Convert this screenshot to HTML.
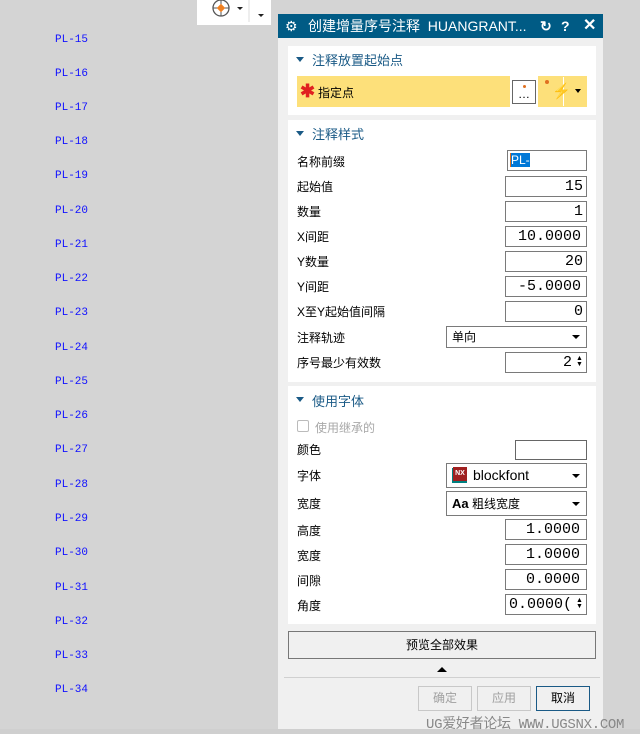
<!DOCTYPE html>
<html><head><meta charset="utf-8"><style>
*{box-sizing:border-box;margin:0;padding:0}
body{width:640px;height:734px;background:#d4d4d4;position:relative;overflow:hidden;font-family:"Liberation Sans","Noto Sans CJK SC",sans-serif;font-size:12px;color:#000}
.a{position:absolute}
.pl{position:absolute;left:55px;color:#1010ff;font-family:"Liberation Mono",monospace;font-size:11px;letter-spacing:0px}
.sec{position:absolute;left:288px;width:308px;background:#fff}
.hd{position:absolute;left:24px;color:#1a5a86;font-size:13px}
.tri{position:absolute;left:8px;width:0;height:0;border-left:4px solid transparent;border-right:4px solid transparent;border-top:5px solid #1a5a86}
.lb{position:absolute;left:297px;font-size:12px}
.in{position:absolute;left:505px;width:82px;height:21px;border:1px solid #7a7a7a;background:#fff;font-family:"Liberation Mono",monospace;font-size:15px;text-align:right;padding-right:3px;line-height:19px;overflow:hidden;white-space:nowrap}
.dd{position:absolute;left:446px;width:141px;border:1px solid #7a7a7a;background:#fff;font-size:12px;padding-left:5px}
.dd:after{content:"";position:absolute;right:6px;top:50%;margin-top:-2px;border-left:4px solid transparent;border-right:4px solid transparent;border-top:4px solid #000}
.btn{position:absolute;top:686px;height:25px;width:54px;border:1px solid #c8c8c8;text-align:center;line-height:23px;color:#a0a0a0;font-size:12px}
</style></head><body>
<div class="a" style="left:197px;top:0;width:74px;height:25px;background:#fff"></div>
<svg class="a" style="left:208px;top:0" width="60" height="22"><circle cx="13" cy="8" r="8" fill="none" stroke="#555" stroke-width="1.3"/><path d="M13 0v16M5 8h16" stroke="#555" stroke-width="1"/><rect x="10" y="5" width="6" height="6" fill="#f08020" transform="rotate(45 13 8)"/><path d="M29 7h6l-3 3z" fill="#222"/><path d="M41 0v22" stroke="#ddd"/><path d="M50 14h6l-3 3z" fill="#222"/></svg>
<div class="pl" style="top:34px">PL-15</div><div class="pl" style="top:68px">PL-16</div><div class="pl" style="top:102px">PL-17</div><div class="pl" style="top:136px">PL-18</div><div class="pl" style="top:170px">PL-19</div><div class="pl" style="top:205px">PL-20</div><div class="pl" style="top:239px">PL-21</div><div class="pl" style="top:273px">PL-22</div><div class="pl" style="top:307px">PL-23</div><div class="pl" style="top:342px">PL-24</div><div class="pl" style="top:376px">PL-25</div><div class="pl" style="top:410px">PL-26</div><div class="pl" style="top:444px">PL-27</div><div class="pl" style="top:479px">PL-28</div><div class="pl" style="top:513px">PL-29</div><div class="pl" style="top:547px">PL-30</div><div class="pl" style="top:582px">PL-31</div><div class="pl" style="top:616px">PL-32</div><div class="pl" style="top:650px">PL-33</div><div class="pl" style="top:684px">PL-34</div>

<div class="a" style="left:278px;top:14px;width:325px;height:720px;background:#f0f0f0"></div>
<div class="a" style="left:278px;top:14px;width:325px;height:24px;background:#005b85;color:#fff;font-size:14px;line-height:24px">
<span class="a" style="left:7px;top:0;font-size:14px">⚙</span>
<span class="a" style="left:30px;top:0">创建增量序号注释&nbsp;&nbsp;HUANGRANT...</span>
<span class="a" style="left:262px;top:0;font-weight:bold">↻</span>
<span class="a" style="left:283px;top:0;font-weight:bold">?</span>
<span class="a" style="left:305px;top:0;font-weight:bold;font-size:16px">✕</span></div>

<div class="sec" style="top:46px;height:69px"><div class="tri" style="top:11px"></div><div class="hd" style="top:4px">注释放置起始点</div>
<div class="a" style="left:9px;top:30px;width:213px;height:31px;background:#fde07a"></div>
<div class="a" style="left:12px;top:36px;color:#e02020;font-size:18px;line-height:18px;font-weight:bold">✱</div>
<div class="a" style="left:30px;top:38px;font-size:12px">指定点</div>
<div class="a" style="left:224px;top:34px;width:24px;height:24px;border:1px solid #666;background:#fff;font-size:12px;text-align:center;line-height:26px">…<span class="a" style="left:10px;top:4px;width:3px;height:3px;background:#e07020;border-radius:2px"></span></div>
<div class="a" style="left:250px;top:30px;width:49px;height:31px;background:#fde07a"></div>
<div class="a" style="left:275px;top:31px;width:1px;height:29px;background:#fff"></div>
<div class="a" style="left:257px;top:34px;width:4px;height:4px;background:#e07020;border-radius:2px"></div>
<div class="a" style="left:264px;top:36px;color:#d09000;font-size:15px">⚡</div>
<div class="a" style="left:287px;top:43px;border-left:3px solid transparent;border-right:3px solid transparent;border-top:4px solid #000"></div>
</div>

<div class="sec" style="top:120px;height:262px"><div class="tri" style="top:11px"></div><div class="hd" style="top:4px">注释样式</div></div>
<div class="lb" style="top:153px">名称前缀</div><div class="in" style="left:507px;top:150px;width:80px;text-align:left;padding-left:2px;font-family:'Liberation Sans';font-size:12px"><span style="background:#0078d7;color:#fff;border-left:1px solid #e07020">PL-</span></div>
<div class="lb" style="top:178px">起始值</div><div class="in" style="top:176px">15</div>
<div class="lb" style="top:203px">数量</div><div class="in" style="top:201px">1</div>
<div class="lb" style="top:228px">X间距</div><div class="in" style="top:226px;text-align:left;padding-left:12px">10.0000</div>
<div class="lb" style="top:253px">Y数量</div><div class="in" style="top:251px">20</div>
<div class="lb" style="top:278px">Y间距</div><div class="in" style="top:276px;text-align:left;padding-left:12px">-5.0000</div>
<div class="lb" style="top:303px">X至Y起始值间隔</div><div class="in" style="top:301px">0</div>
<div class="lb" style="top:329px">注释轨迹</div><div class="dd" style="top:326px;height:22px;line-height:20px">单向</div>
<div class="lb" style="top:354px">序号最少有效数</div><div class="in" style="top:352px;padding-right:14px">2</div><div class="a" style="left:576px;top:356px;font-size:7px;line-height:6px">▲<br>▼</div>

<div class="sec" style="top:386px;height:238px"><div class="tri" style="top:11px"></div><div class="hd" style="top:5px">使用字体</div>
<div class="a" style="left:9px;top:34px;width:12px;height:12px;border:1px solid #bbb;border-radius:2px"></div>
<div class="a" style="left:27px;top:33px;color:#a8a8a8">使用继承的</div></div>
<div class="lb" style="top:441px">颜色</div><div class="a" style="left:515px;top:440px;width:72px;height:20px;border:1px solid #666;background:#fff"></div>
<div class="lb" style="top:467px">字体</div><div class="dd" style="top:463px;height:25px;line-height:23px;font-size:14px;padding-left:26px"><span class="a" style="left:5px;top:4px;width:15px;height:15px;background:#008080"></span><span class="a" style="left:6px;top:3px;width:14px;height:14px;background:#a02020;color:#fff;font-size:7px;line-height:14px;text-align:center;font-weight:bold">NX</span>blockfont</div>
<div class="lb" style="top:495px">宽度</div><div class="dd" style="top:491px;height:25px;line-height:23px;font-size:12px"><b style="font-size:13px">Aa</b> 粗线宽度</div>
<div class="lb" style="top:522px">高度</div><div class="in" style="top:519px;text-align:left;padding-left:20px">1.0000</div>
<div class="lb" style="top:547px">宽度</div><div class="in" style="top:544px;text-align:left;padding-left:20px">1.0000</div>
<div class="lb" style="top:572px">间隙</div><div class="in" style="top:569px;text-align:left;padding-left:20px">0.0000</div>
<div class="lb" style="top:597px">角度</div><div class="in" style="top:594px;text-align:left;padding-left:3px">0.0000(</div><div class="a" style="left:576px;top:598px;font-size:7px;line-height:6px">▲<br>▼</div>

<div class="a" style="left:288px;top:631px;width:308px;height:28px;border:1px solid #777;background:#f0f0f0;text-align:center;line-height:26px">预览全部效果</div>
<div class="a" style="left:437px;top:667px;border-left:5px solid transparent;border-right:5px solid transparent;border-bottom:5px solid #000"></div>
<div class="a" style="left:284px;top:677px;width:316px;height:1px;background:#d0d0d0"></div>
<div class="btn" style="left:418px">确定</div>
<div class="btn" style="left:477px">应用</div>
<div class="btn" style="left:536px;border-color:#1a5a86;color:#000">取消</div>
<div class="a" style="left:0;top:729px;width:640px;height:5px;background:#cfcfcf"></div>
<div class="a" style="left:426px;top:713px;color:#888;font-family:'Liberation Mono','Noto Sans CJK SC',monospace;font-size:14px;letter-spacing:-0.3px;white-space:nowrap">UG爱好者论坛 WWW.UGSNX.COM</div>
</body></html>
